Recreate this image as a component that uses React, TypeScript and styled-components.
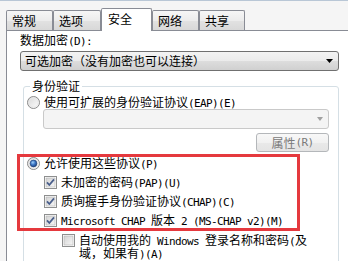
import React from 'react';
import styled, { createGlobalStyle } from 'styled-components';

const Global = createGlobalStyle`
  html, body { margin: 0; padding: 0; background: #f5f5f5; }
  body {
    font-family: "Noto Sans CJK SC", "Noto Sans", sans-serif;
    font-size: 12px;
    color: #000;
  }
`;

const Window = styled.div`
  position: relative;
  width: 348px;
  height: 261px;
  overflow: hidden;
  box-sizing: border-box;
  background: #f5f5f5;
  border-top: 1px solid #b9c7d6;
`;

const TabStrip = styled.div`
  display: flex;
  align-items: flex-end;
  height: 29px;
  padding-left: 6px;
  position: relative;
  z-index: 2;
`;

const Tab = styled.div<{ $active?: boolean; $w: number }>`
  box-sizing: border-box;
  width: ${(p) => p.$w}px;
  height: ${(p) => (p.$active ? 23 : 20)}px;
  margin-bottom: ${(p) => (p.$active ? -1 : 0)}px;
  border: 1px solid #898c95;
  border-bottom: none;
  border-radius: 2px 2px 0 0;
  background: ${(p) =>
    p.$active ? '#ffffff' : 'linear-gradient(#f6f6f6, #ececec 50%, #e2e2e2 51%, #d8d8d8)'};
  display: flex;
  align-items: center;
  padding-left: ${(p) => (p.$active ? 6 : 5)}px;
  padding-bottom: ${(p) => (p.$active ? 2 : 0)}px;
  line-height: 14px;
  font-size: 12px;
`;

const Panel = styled.div`
  position: relative;
  z-index: 1;
  box-sizing: border-box;
  margin-left: 6px;
  height: 240px;
  background: #ffffff;
  border-left: 1px solid #898c95;
  border-top: 1px solid #898c95;
  padding: 2px 0 0 13px;
`;

const FieldLabel = styled.div`
  line-height: 14px;
  height: 14px;
  white-space: nowrap;
`;

const Latin = styled.span`
  font-family: "DejaVu Sans Mono", "Liberation Mono", monospace;
  font-size: 11px;
  letter-spacing: -0.62px;
  line-height: 0;
`;

const Combo = styled.div<{ $disabled?: boolean; $w: number }>`
  box-sizing: border-box;
  width: ${(p) => p.$w}px;
  height: 20px;
  border: 1px solid ${(p) => (p.$disabled ? '#c9c9c9' : '#707070')};
  border-radius: 3px;
  background: ${(p) =>
    p.$disabled ? '#f4f4f4' : 'linear-gradient(#f3f3f3, #ebebeb 50%, #dddddd 51%, #d0d0d0)'};
  display: flex;
  align-items: center;
  justify-content: space-between;
  padding: 0 5px 0 4px;
  line-height: 14px;
`;

const ComboBlock = styled(Combo)`
  margin-top: 4px;
`;

const Arrow = styled.svg`
  display: block;
  flex: none;
`;

const Group = styled.fieldset`
  box-sizing: border-box;
  width: 316px;
  margin: 8px 0 0 3px;
  padding: 2px 0 0 3px;
  border: 1px solid #d5dfe5;
  border-radius: 3px;
  height: 200px;
`;

const Legend = styled.legend`
  padding: 0 2px;
  margin-left: 3px;
  line-height: 14px;
  height: 14px;
  font-size: 12px;
`;

const OptionRow = styled.div<{ $indent?: number; $top?: number; $h?: number }>`
  display: flex;
  align-items: flex-start;
  gap: 4px;
  height: ${(p) => p.$h ?? 14}px;
  margin-left: ${(p) => p.$indent ?? 0}px;
  margin-top: ${(p) => p.$top ?? 0}px;
  line-height: 14px;
`;

const OptionText = styled.div<{ $lh?: number }>`
  line-height: ${(p) => p.$lh ?? 14}px;
  white-space: nowrap;
`;

const TextLine = styled.div<{ $lh: number }>`
  height: ${(p) => p.$lh}px;
  line-height: ${(p) => p.$lh}px;
  white-space: nowrap;
`;

const Mark = styled.svg`
  display: block;
  flex: none;
  width: 13px;
  height: 13px;
  margin-top: 1px;
`;

const InnerCombo = styled(Combo)`
  margin-left: 16px;
`;

const ButtonRow = styled.div`
  display: flex;
  justify-content: flex-end;
  width: 302px;
  margin-top: 4px;
`;

const Button = styled.div`
  box-sizing: border-box;
  width: 73px;
  height: 19px;
  border: 1px solid #b4b7ba;
  border-radius: 3px;
  background: linear-gradient(#f8f8f8, #f1f1f1 50%, #e9e9e9 51%, #e4e4e4);
  color: #7a7a7a;
  display: flex;
  align-items: center;
  justify-content: center;
  line-height: 14px;
  white-space: nowrap;
`;

const Highlight = styled.div`
  position: absolute;
  left: 17px;
  top: 153px;
  width: 283px;
  height: 77px;
  box-sizing: border-box;
  border: 3px solid #e5393e;
  pointer-events: none;
  z-index: 5;
`;

const Radio = ({ checked }: { checked?: boolean }) => (
  <Mark viewBox="0 0 13 13">
    <defs>
      <linearGradient id="rbg" x1="0" y1="0" x2="1" y2="1">
        <stop offset="0" stopColor="#d6d6d6" />
        <stop offset="1" stopColor="#ffffff" />
      </linearGradient>
      <radialGradient id="rdot" cx="0.4" cy="0.35" r="0.7">
        <stop offset="0" stopColor="#9fd0f8" />
        <stop offset="0.5" stopColor="#3a74c4" />
        <stop offset="1" stopColor="#1a3f7c" />
      </radialGradient>
    </defs>
    <circle cx="6.5" cy="6.5" r="6" fill="url(#rbg)" stroke="#8a8a8a" strokeWidth="1" />
    <circle cx="6.5" cy="6.5" r="4.6" fill="none" stroke="#e8e8e8" strokeWidth="1" />
    {checked && <circle cx="6.5" cy="6.5" r="3.4" fill="url(#rdot)" stroke="#1f3d70" strokeWidth="0.6" />}
  </Mark>
);

const Check = ({ checked }: { checked?: boolean }) => (
  <Mark viewBox="0 0 13 13">
    <defs>
      <linearGradient id="cbg" x1="0" y1="0" x2="1" y2="1">
        <stop offset="0" stopColor="#d3d3d3" />
        <stop offset="1" stopColor="#f7f7f7" />
      </linearGradient>
    </defs>
    <rect x="0.5" y="0.5" width="12" height="12" fill="#ffffff" stroke="#8e8f8f" />
    <rect x="2" y="2" width="9" height="9" fill="url(#cbg)" stroke="#b3b3b3" strokeWidth="0.6" />
    {checked && (
      <path d="M3 6.4 L5.3 9 L10 3.4" fill="none" stroke="#4a5f8c" strokeWidth="1.8" strokeLinejoin="round" />
    )}
  </Mark>
);

const DownArrow = ({ color, w }: { color: string; w: number }) => (
  <Arrow width={w} height={4} viewBox={`0 0 ${w} 4`}>
    <polygon points={`0,0 ${w},0 ${w / 2},4`} fill={color} />
  </Arrow>
);

export default function App() {
  return (
    <>
      <Global />
      <Window>
        <TabStrip>
          <Tab $w={47}>常规</Tab>
          <Tab $w={48}>选项</Tab>
          <Tab $w={51} $active>安全</Tab>
          <Tab $w={47}>网络</Tab>
          <Tab $w={46}>共享</Tab>
        </TabStrip>
        <Panel>
          <FieldLabel>
            数据加密<Latin>(D):</Latin>
          </FieldLabel>
          <ComboBlock $w={319}>
            <span>可选加密（没有加密也可以连接）</span>
            <DownArrow color="#000" w={7} />
          </ComboBlock>
          <Group>
            <Legend>身份验证</Legend>
            <OptionRow>
              <Radio />
              <OptionText>
                使用可扩展的身份验证协议<Latin>(EAP)(E)</Latin>
              </OptionText>
            </OptionRow>
            <InnerCombo $w={286} $disabled>
              <span />
              <DownArrow color="#a0a0a0" w={6} />
            </InnerCombo>
            <ButtonRow>
              <Button>
                属性<Latin>(R)</Latin>
              </Button>
            </ButtonRow>
            <OptionRow $top={4}>
              <Radio checked />
              <OptionText>
                允许使用这些协议<Latin>(P)</Latin>
              </OptionText>
            </OptionRow>
            <OptionRow $indent={17} $top={5}>
              <Check checked />
              <OptionText>
                未加密的密码<Latin>(PAP)(U)</Latin>
              </OptionText>
            </OptionRow>
            <OptionRow $indent={17} $top={5}>
              <Check checked />
              <OptionText>
                质询握手身份验证协议<Latin>(CHAP)(C)</Latin>
              </OptionText>
            </OptionRow>
            <OptionRow $indent={17} $top={5}>
              <Check checked />
              <OptionText>
                <Latin>Microsoft CHAP </Latin>版本<Latin> 2 (MS-CHAP v2)(M)</Latin>
              </OptionText>
            </OptionRow>
            <OptionRow $indent={35} $top={6} $h={26}>
              <Check />
              <OptionText>
                <TextLine $lh={13}>
                  自动使用我的<Latin> Windows </Latin>登录名称和密码<Latin>(</Latin>及
                </TextLine>
                <TextLine $lh={13}>
                  域，如果有<Latin>)(A)</Latin>
                </TextLine>
              </OptionText>
            </OptionRow>
          </Group>
        </Panel>
        <Highlight />
      </Window>
    </>
  );
}
